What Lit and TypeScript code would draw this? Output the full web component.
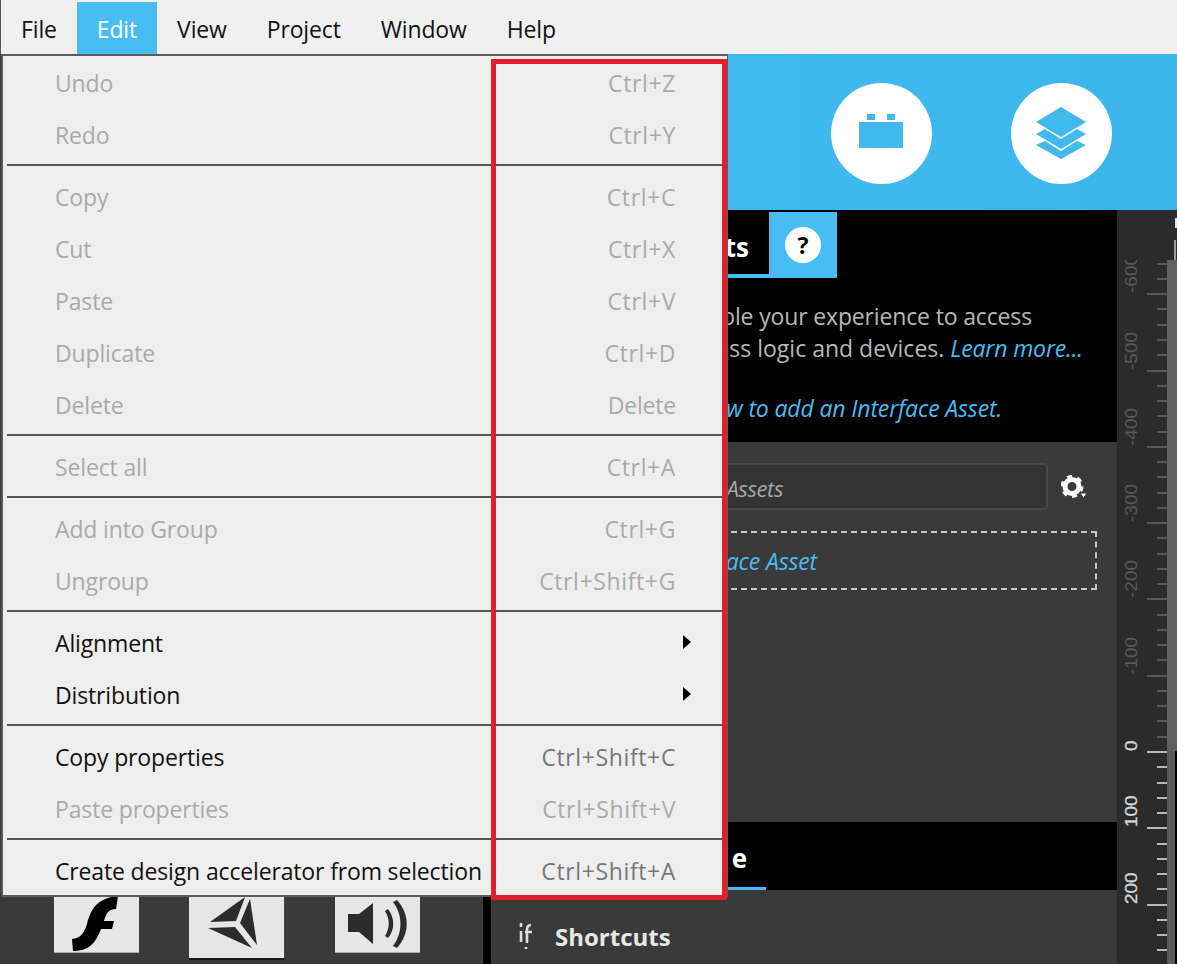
import { LitElement, html, css, svg } from "lit";
import { customElement } from "lit/decorators.js";

type Row = { t: string; k?: string; on?: boolean; sub?: boolean } | "sep";
const MENU: Row[] = [
  { t: "Undo", k: "Ctrl+Z" }, { t: "Redo", k: "Ctrl+Y" }, "sep",
  { t: "Copy", k: "Ctrl+C" }, { t: "Cut", k: "Ctrl+X" }, { t: "Paste", k: "Ctrl+V" },
  { t: "Duplicate", k: "Ctrl+D" }, { t: "Delete", k: "Delete" }, "sep",
  { t: "Select all", k: "Ctrl+A" }, "sep",
  { t: "Add into Group", k: "Ctrl+G" }, { t: "Ungroup", k: "Ctrl+Shift+G" }, "sep",
  { t: "Alignment", on: true, sub: true }, { t: "Distribution", on: true, sub: true }, "sep",
  { t: "Copy properties", k: "Ctrl+Shift+C", on: true }, { t: "Paste properties", k: "Ctrl+Shift+V" }, "sep",
  { t: "Create design accelerator from selection", k: "Ctrl+Shift+A", on: true },
];

function ruler() {
  const out: unknown[] = [];
  const zero = 752;
  const step = 15.26;
  for (let i = -32; i <= 14; i++) {
    const y = Math.round(zero + i * step);
    if (y < 262) continue;
    const major = i % 5 === 0;
    const c = i >= 0 ? "#b9b9b9" : "#585858";
    out.push(svg`<rect x=${major ? 30 : 40} y=${y - 1 - 210} width=${major ? 20 : 10} height="2" fill=${c}></rect>`);
    if (major) {
      const v = i * 20;
      out.push(svg`<text transform="translate(20 ${y - 211}) rotate(-90) scale(1 .82)" class=${i >= 0 ? "lb pos" : "lb"}>${v}</text>`);
    }
  }
  return out;
}

@customElement("app-root")
export class AppRoot extends LitElement {
  static styles = css`
    :host { display: block; width: 1177px; height: 964px; position: relative; overflow: hidden;
      font-family: "Open Sans", "Noto Sans", sans-serif; background: #3a3a3a; }
    .bar { height: 54px; box-sizing: border-box; display: flex; align-items: stretch; background: #f0f0f0;
      padding: 2px 0 0 0; border-left: 1px solid #555; font-size: 23px; color: #111; }
    .bar span { display: flex; align-items: center; padding: 2px 20px 0; letter-spacing: -.15px; }
    .bar .act { background: #48bdf4; color: #fff; }
    .work { display: grid; grid-template-columns: 483px 8px 1fr; height: 910px; }
    .left { background: #3a3a3a; display: flex; align-items: flex-end; padding: 0 0 11px 54px; gap: 50px; }
    .btn { width: 85px; height: 70px; box-sizing: border-box; background: #e6e6e6; border-bottom: 1px solid #aaa;
      display: flex; align-items: flex-end; justify-content: center; }
    .btn.mid { width: 96px; height: 76px; margin-bottom: -7px; border-bottom: 2px solid #1a1a1a; border-right: 1px solid #444; }
    .btn svg { display: block; flex: none; }
    .div { background: #000; }
    .main { display: flex; flex-direction: column; min-width: 0; }
    .band { height: 156px; box-sizing: border-box; flex: none; background: linear-gradient(90deg, #45bcf0, #3ab5ec); display: flex; justify-content: flex-end;
      align-items: center; gap: 79px; padding: 2px 65.5px 0 0; }
    .circle { width: 101px; height: 101px; border-radius: 50%; background: #fff; display: flex; align-items: center; justify-content: center; }
    .lower { flex: 1; display: grid; grid-template-columns: 626px 60px; min-height: 0; }
    .panel { display: flex; flex-direction: column; min-width: 0; }
    .info { height: 232px; flex: none; background: #000; box-sizing: border-box; padding-top: 2px; color: #b8b8b8; font-size: 23px; letter-spacing: -.15px; }
    .tabs { display: flex; height: 66px; }
    .tab { width: 278px; box-sizing: border-box; border-bottom: 4px solid #48bdf4; color: #fff; font-weight: 700; font-size: 26px; letter-spacing: 0;
      display: flex; align-items: center; justify-content: flex-end; padding: 8px 20px 0 0; background: #000; }
    .help { width: 68px; background: #48bdf4; display: flex; align-items: center; justify-content: center; }
    .q { width: 36px; height: 36px; border-radius: 50%; background: #fff; color: #000; font-weight: 700; font-size: 23px;
      display: flex; align-items: center; justify-content: center; }
    .line { white-space: nowrap; height: 32px; line-height: 32px; text-align: right; }
    .l1 { margin-top: 22px; padding-right: 85px; }
    .l2 { padding-right: 34px; letter-spacing: 0; }
    .l3 { margin-top: 28px; padding-right: 115px; }
    i { color: #48bdf4; letter-spacing: -.15px; }
    .assets { flex: 1; background: #3a3a3a; display: flex; flex-direction: column; padding: 21px 20px 0 20px; }
    .searchrow { display: flex; align-items: center; }
    .search { width: 537px; height: 47px; box-sizing: border-box; background: #333; border: 2px solid #484848; border-radius: 4px;
      font-style: italic; color: #a8a8a8; font-size: 22px; letter-spacing: -.4px; display: flex; align-items: center; justify-content: flex-end; padding: 2px 263px 0 0; white-space: nowrap; }
    .gear { margin-left: 13px; display: block; }
    .drop { margin-top: 21px; height: 59px; box-sizing: border-box; border: 2px dashed #c8c8c8; display: flex; align-items: center; justify-content: flex-end;
      font-size: 23px; padding: 1px 278px 0 0; white-space: nowrap; }
    .tab2 { height: 68px; flex: none; background: #000; }
    .tab2 div { width: 275px; height: 68px; box-sizing: border-box; border-bottom: 3px solid #48bdf4; color: #fff; font-weight: 700; font-size: 26px;
      display: flex; align-items: center; justify-content: flex-end; padding: 7px 19px 0 0; }
    .short { height: 74px; box-sizing: border-box; flex: none; background: #3a3a3a; display: flex; align-items: center; padding: 18px 0 0 26px; color: #e8e8e8; font-weight: 700; font-size: 24px; gap: 22px; }
    .ruler { background: #2b2b2b; position: relative; overflow: hidden; }
    .ruler svg { display: block; }
    .lb { font-family: "Liberation Sans", sans-serif; font-size: 19px; fill: #5a5a5a; }
    .lb.pos { fill: #d5d5d5; stroke: #d5d5d5; stroke-width: .4px; }
    .menu { position: absolute; left: 1px; top: 54px; width: 727px; height: 843px; box-sizing: border-box; background: #eee;
      border: 2px solid #5c5c5c; border-right-width: 1px; padding: 2px 0 0 4px; font-size: 23px; color: #aaa; }
    .row { height: 52px; box-sizing: border-box; display: flex; align-items: center; justify-content: space-between; padding: 0 52px 2px 48px; margin-right: -1px; white-space: nowrap; position: relative; }
    .t { letter-spacing: -.15px; }
    .k { letter-spacing: .62px; }
    .k.plain { letter-spacing: -.2px; }
    .row.on .t { color: #111; }
    .row.on .k { color: #777; }
    .sep { height: 2px; background: #555; margin: 2px 3px 6px 0; }
    .tri { position: absolute; right: 37px; top: 17px; width: 0; height: 0; border-left: 8px solid #000; border-top: 7px solid transparent; border-bottom: 7px solid transparent; }
    .red { position: absolute; left: 491px; top: 59px; width: 236px; height: 841px; box-sizing: border-box; border: 5px solid #e31e2c; }
  `;

  render() {
    return html`
      <div class="bar">
        ${["File", "Edit", "View", "Project", "Window", "Help"].map(
          (m) => html`<span class=${m === "Edit" ? "act" : ""}>${m}</span>`
        )}
      </div>
      <div class="work">
        <div class="left">
          <div class="btn">
            <svg width="85" height="60" viewBox="0 0 85 60">
              <path d="M64 4 L62 17 C54 17 52 22 50 29 L60 29 L58 37 L47 37 C42 50 36 59 19 59 L18 47 C27 46 30 41 33 32 C37 16 44 6 64 4 Z" fill="#000"></path>
            </svg>
          </div>
          <div class="btn mid">
            <svg width="95" height="66" viewBox="0 0 95 66">
              <path d="M56 5 L21 30 L47 29 Z" fill="#2c2c2c"></path>
              <path d="M61 7 L68 53 L51 31 Z" fill="#2c2c2c"></path>
              <path d="M19 36 L46 35 L63 56 Z" fill="#2c2c2c"></path>
            </svg>
          </div>
          <div class="btn">
            <svg width="85" height="52" viewBox="0 0 85 52">
              <path d="M13 14 H24 L38 3 V44 L24 32 H13 Z" fill="#2c2c2c"></path>
              <path d="M50 11 L53 9 C60 18 60 30 53 38 L50 36 C55 28 55 19 50 11 Z" fill="#2c2c2c"></path>
              <path d="M58 2 L62 0 C75 14 75 34 62 48 L58 46 C68 33 68 15 58 2 Z" fill="#2c2c2c"></path>
            </svg>
          </div>
        </div>
        <div class="div"></div>
        <div class="main">
          <div class="band">
            <div class="circle">
              <svg width="46" height="38" viewBox="0 0 46 38">
                <rect x="9" y="0" width="8" height="6" fill="#41b9ee"></rect>
                <rect x="29" y="0" width="8" height="6" fill="#41b9ee"></rect>
                <rect x="1" y="8" width="44" height="26" fill="#41b9ee"></rect>
              </svg>
            </div>
            <div class="circle">
              <svg width="52" height="54" viewBox="0 0 52 54">
                <path d="M26 1 L51 16 L26 31 L1 16 Z" fill="#41b9ee"></path>
                <path d="M42 23 L51 28 L26 43 L1 28 L10 23 L26 33 Z" fill="#41b9ee"></path>
                <path d="M42 35 L51 39 L26 53 L1 39 L10 35 L26 45 Z" fill="#41b9ee"></path>
              </svg>
            </div>
          </div>
          <div class="lower">
            <div class="panel">
              <div class="info">
                <div class="tabs">
                  <div class="tab">ts</div>
                  <div class="help"><div class="q">?</div></div>
                </div>
                <div class="line l1">ble your experience to access</div>
                <div class="line l2">ss logic and devices. <i>Learn more...</i></div>
                <div class="line l3"><i>w to add an Interface Asset.</i></div>
              </div>
              <div class="assets">
                <div class="searchrow">
                  <div class="search">Assets</div>
                  <svg class="gear" width="27" height="26" viewBox="0 0 27 26">
                    <circle cx="11" cy="12.5" r="7" fill="none" stroke="#fff" stroke-width="5"></circle>
                    <circle cx="11" cy="12.5" r="10" fill="none" stroke="#fff" stroke-width="3" stroke-dasharray="5 5.47"></circle>
                    <path d="M19 19 H26 L22.5 24 Z" fill="#fff" stroke="#3a3a3a" stroke-width="1"></path>
                  </svg>
                </div>
                <div class="drop"><i>ace Asset</i></div>
              </div>
              <div class="tab2"><div>e</div></div>
              <div class="short">
                <svg width="16" height="28" viewBox="0 0 16 28">
                  <path d="M4 1 V5 M4 9 V20 M14 3 C11 3 10 5 10 8 V21 M8 10 H15 M9 25 V27" stroke="#ddd" stroke-width="2.6" fill="none"></path>
                </svg>
                <span>Shortcuts</span>
              </div>
            </div>
            <div class="ruler">
              <svg width="60" height="754" viewBox="0 0 60 754">
                <defs><clipPath id="rc"><rect x="0" y="50" width="60" height="704"></rect></clipPath></defs>
                <g clip-path="url(#rc)">${ruler()}</g>
                <rect x="50" y="50" width="10" height="491" fill="#606060"></rect>
                <rect x="50" y="541" width="8" height="213" fill="#5a5a5a"></rect>
                <rect x="58" y="541" width="2" height="213" fill="#000"></rect>
                <rect x="57" y="30" width="2" height="20" fill="#9a9a9a"></rect>
                <rect x="58" y="8" width="2" height="10" fill="#cfe8f6"></rect>
              </svg>
            </div>
          </div>
        </div>
      </div>
      <div class="menu">
        ${MENU.map((r) =>
          r === "sep"
            ? html`<div class="sep"></div>`
            : html`<div class="row ${r.on ? "on" : ""}">
                <span class="t">${r.t}</span>
                ${r.k ? html`<span class="k ${r.k.startsWith("Ctrl") ? "" : "plain"}">${r.k}</span>` : ""}
                ${r.sub ? html`<span class="tri"></span>` : ""}
              </div>`
        )}
      </div>
      <div class="red"></div>
    `;
  }
}
